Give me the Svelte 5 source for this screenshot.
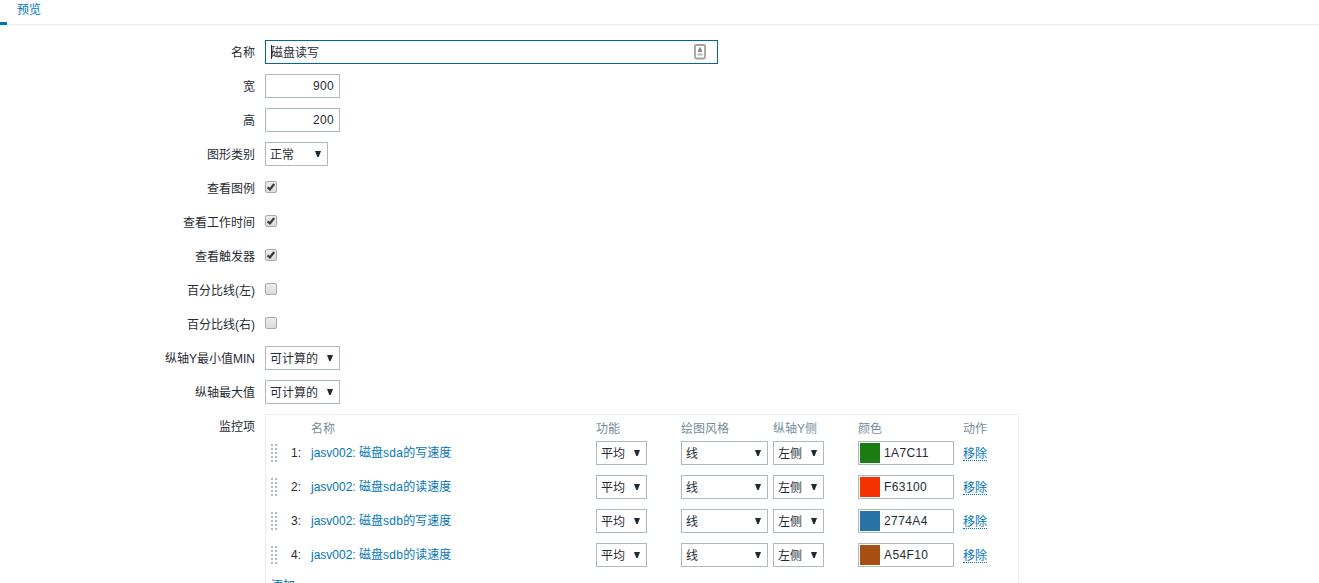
<script>
  const checks = [
    { label: '查看图例', on: true },
    { label: '查看工作时间', on: true },
    { label: '查看触发器', on: true },
    { label: '百分比线(左)', on: false },
    { label: '百分比线(右)', on: false }
  ];
  const axes = [
    ['纵轴Y最小值MIN', '可计算的'],
    ['纵轴最大值', '可计算的']
  ];
  const items = [
    { disk: 'sda', metric: '的写速度', color: '1A7C11' },
    { disk: 'sda', metric: '的读速度', color: 'F63100' },
    { disk: 'sdb', metric: '的写速度', color: '2774A4' },
    { disk: 'sdb', metric: '的读速度', color: 'A54F10' }
  ];
</script>

{#snippet select(value, cls)}
  <div class="box select {cls}">
    <span>{value}</span>
    <svg width="6" height="6" viewBox="0 0 6 6"><path d="M0 0H6L3.7 6H2.3Z" fill="#1f2c33" /></svg>
  </div>
{/snippet}

<main>
  <nav><span class="active"></span><a href="#preview">预览</a></nav>

  <div class="form">
    <div class="row">
      <div class="label">名称</div>
      <div class="box name">
        <i class="caret"></i><span>磁盘读写</span>
        <svg width="12" height="16" viewBox="0 0 12 16">
          <rect x="1" y="1" width="10" height="13.5" rx="1.2" fill="#fff" stroke="#a0a0a0" stroke-width="1.8" />
          <path d="M5 3.5H7V5.5H8V8H4V5.5H5Z" fill="#8c8c8c" />
          <path d="M3.5 9.5H8.5V11.5H3.5Z" fill="#b5b5b5" />
        </svg>
      </div>
    </div>
    <div class="row"><div class="label">宽</div><div class="box num">900</div></div>
    <div class="row"><div class="label">高</div><div class="box num">200</div></div>
    <div class="row"><div class="label">图形类别</div>{@render select('正常', 'w63')}</div>
    {#each checks as c}
      <div class="row">
        <div class="label">{c.label}</div>
        <div class="check">
          {#if c.on}
            <svg width="10" height="10" viewBox="0 0 10 10"><path d="M1.6 5.4L3.9 7.4L8.2 2" fill="none" stroke="#3c3c3c" stroke-width="2.3" /></svg>
          {/if}
        </div>
      </div>
    {/each}
    {#each axes as [label, value]}
      <div class="row"><div class="label">{label}</div>{@render select(value, 'w75')}</div>
    {/each}

    <div class="row last">
      <div class="label">监控项</div>
      <div class="items">
        <div class="grid head">
          <span></span><span></span><span>名称</span><span>功能</span><span>绘图风格</span><span>纵轴Y侧</span><span>颜色</span><span>动作</span>
        </div>
        {#each items as item, i}
          <div class="grid item">
            <svg class="drag" width="6" height="18" viewBox="0 0 6 18">
              {#each [0, 4, 8, 12, 16] as y}
                <rect x="0" {y} width="2" height="2" /><rect x="4" {y} width="2" height="2" />
              {/each}
            </svg>
            <span class="index">{i + 1}:</span>
            <a href="#item">jasv002: 磁盘<span class="disk">{item.disk}</span>{item.metric}</a>
            {@render select('平均', 'w51')}
            {@render select('线', 'w87')}
            {@render select('左侧', 'w51')}
            <div class="box color"><i style="background: #{item.color}"></i><span>{item.color}</span></div>
            <div class="cell"><a class="action" href="#remove">移除</a></div>
          </div>
        {/each}
        <div class="add"><a class="action" href="#add">添加</a></div>
      </div>
    </div>
  </div>
</main>

<style>
  :global(body) {
    background: #fff;
  }
  main {
    height: 583px;
    overflow: hidden;
    font: 12px/14px "Liberation Sans", "Noto Sans CJK SC", sans-serif;
    color: #1f2c33;
    white-space: nowrap;
  }
  main :global(*) {
    box-sizing: border-box;
  }
  a {
    color: #0275b8;
    text-decoration: none;
  }
  nav {
    height: 25px;
    border-bottom: 1px solid #ebebeb;
    display: flex;
    gap: 10px;
  }
  nav a {
    padding-top: 3px;
  }
  .active {
    width: 7px;
    height: 25px;
    border-bottom: 3px solid #0275b8;
  }
  .form {
    padding-top: 15px;
    display: flex;
    flex-direction: column;
    gap: 10px;
  }
  .row {
    display: flex;
    align-items: center;
    gap: 10px;
    height: 24px;
    flex: none;
  }
  .label {
    width: 255px;
    padding-top: 2px;
    text-align: right;
  }
  .last {
    align-items: flex-start;
    height: auto;
  }
  .last .label {
    padding-top: 6px;
  }
  .box {
    height: 24px;
    border: 1px solid #acbbc2;
    background: #fff;
    display: flex;
    align-items: center;
  }
  .name {
    width: 453px;
    border-color: #02659f;
    padding: 0 11px 0 5px;
  }
  .name span,
  .select span {
    padding-top: 2px;
  }
  .caret {
    width: 1px;
    height: 14px;
    margin-right: -1px;
    background: #1f2c33;
  }
  .name svg {
    margin-left: auto;
  }
  .num {
    width: 75px;
    justify-content: flex-end;
    padding-right: 5px;
    letter-spacing: 0.33px;
  }
  .select {
    justify-content: space-between;
    padding: 0 6px 0 4px;
  }
  .w51 {
    width: 51px;
  }
  .w63 {
    width: 63px;
  }
  .w75 {
    width: 75px;
  }
  .w87 {
    width: 87px;
  }
  .check {
    width: 12px;
    height: 12px;
    margin-top: -2px;
    border: 1px solid #a9a9a9;
    border-radius: 2px;
    background: linear-gradient(#ededed, #dcdcdc);
  }
  .check svg {
    display: block;
  }
  .items {
    width: 754px;
    border: 1px solid #ebebeb;
    padding: 5px 4px 5px 5px;
  }
  .grid {
    display: grid;
    grid-template-columns: 20px 20px 285px 85px 92px 85px 105px 1fr;
    align-items: center;
  }
  .head {
    height: 16px;
    padding-top: 2px;
    color: #768d99;
  }
  .item {
    height: 24px;
    margin: 5px 0 10px;
  }
  .drag {
    fill: #acbbc2;
  }
  .index {
    letter-spacing: 0.2px;
  }
  .disk {
    letter-spacing: 0.25px;
  }
  .item + .item {
    margin-top: 0;
  }
  .color {
    width: 96px;
    padding-left: 1px;
    gap: 4px;
    letter-spacing: 0.4px;
  }
  .color i {
    width: 20px;
    height: 20px;
  }
  .cell {
    padding-top: 2px;
  }
  .action {
    display: inline-block;
    height: 14px;
    border-bottom: 1px dotted #0275b8;
  }
  .add {
    padding-top: 2px;
  }
</style>
